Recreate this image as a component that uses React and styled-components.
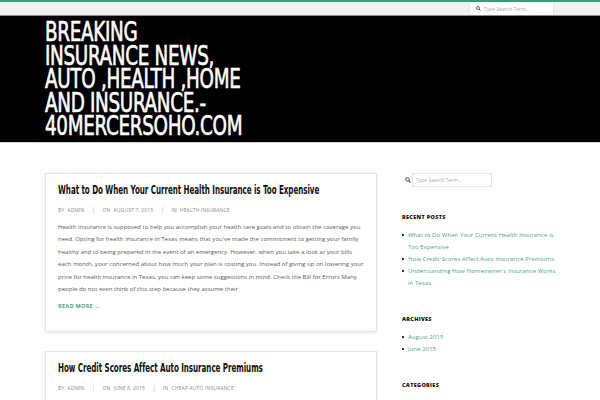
import React from 'react'
import styled, { createGlobalStyle } from 'styled-components'

const colors = {
  green: '#3a9f76',
  link: '#4aa383',
  text: '#5a5a5a',
  meta: '#8a8a8a',
  border: '#e4e4e4',
}

const condensed = '"DejaVu Sans Condensed", "DejaVu Sans", sans-serif'

const GlobalStyle = createGlobalStyle`
  html, body {
    margin: 0;
    padding: 0;
    background: #fff;
    font-family: "Open Sans", "Liberation Sans", sans-serif;
  }
`

const TopBar = styled.div`
  height: 13px;
  border-top: 2px solid ${colors.green};
  border-bottom: 1px solid #8d8d8d;
  background: #f1f1f1;
  display: flex;
  justify-content: flex-end;
  padding-right: 47px;
`
const TopSearch = styled.div`
  width: 83px;
  height: 13px;
  background: #fff;
  box-shadow: 0 0 2px rgba(0, 0, 0, 0.12);
  display: flex;
  align-items: center;
  gap: 3px;
  padding-left: 6px;
  box-sizing: border-box;
`
const Placeholder = styled.span`
  font-size: 5px;
  color: #a9a9a9;
`
const Header = styled.header`
  background: #000;
  height: 127px;
  padding: 5px 45px 0;
  box-sizing: border-box;
  border-bottom: 1px solid #cfcfcf;
`
const SiteTitle = styled.h1`
  margin: 0;
  color: #fff;
  font-family: ${condensed};
  font-weight: 400;
  font-size: 26px;
  line-height: 23.5px;
  letter-spacing: -0.4px;
  text-transform: uppercase;
  white-space: nowrap;
  -webkit-text-stroke: 0.6px #fff;
  transform: scaleX(0.785);
  transform-origin: left top;
`
const Content = styled.div`
  display: flex;
  gap: 23px;
  padding: 30px 42px 0 45px;
`
const Main = styled.main`
  width: 332px;
  flex-shrink: 0;
`
const Card = styled.article`
  border: 1px solid ${colors.border};
  box-shadow: 0 1px 3px rgba(0, 0, 0, 0.08);
  padding: 7px 12px 20px 12px;
  margin-bottom: 19px;
`
const PostTitle = styled.h2`
  margin: 0 0 7px;
  font-family: ${condensed};
  font-weight: 700;
  font-size: 12px;
  line-height: 18px;
  color: #111;
  letter-spacing: -0.1px;
  white-space: nowrap;
  transform: scaleX(0.665);
  transform-origin: left center;
`
const Meta = styled.div`
  display: flex;
  align-items: center;
  font-size: 5px;
  line-height: 8px;
  color: ${colors.meta};
  text-transform: uppercase;
  letter-spacing: 0.15px;
  margin-bottom: 7px;
`
const MetaItem = styled.span`
  & + &::before {
    content: '|';
    margin: 0 7px;
    font-size: 7px;
    color: #bbb;
  }
`
const MetaLabel = styled.span`
  margin-right: 3px;
`
const Body = styled.p`
  margin: 0 0 6px;
  font-size: 6.05px;
  line-height: 12.4px;
  color: ${colors.text};
`
const ReadMore = styled.a`
  display: block;
  font-size: 5.5px;
  line-height: 10px;
  font-weight: 700;
  color: ${colors.link};
  text-transform: uppercase;
  letter-spacing: 0.3px;
  text-decoration: none;
`
const Sidebar = styled.aside`
  width: 156px;
  padding-left: 2px;
`
const SideSearch = styled.div`
  display: flex;
  align-items: center;
  gap: 1px;
  margin: 0 0 24px 3px;
`
const SideInput = styled.div`
  width: 80px;
  height: 14px;
  border: 1px solid #e6e6e6;
  box-sizing: border-box;
  display: flex;
  align-items: center;
  padding-left: 3px;
`
const WidgetTitle = styled.h3`
  margin: 0 0 6px;
  font-size: 5.5px;
  font-weight: 800;
  color: #111;
  text-transform: uppercase;
  letter-spacing: 0.3px;
  line-height: 12px;
`
const List = styled.ul`
  margin: 0 0 ${p => p.gap || 30}px;
  padding: 0;
  list-style: none;
`
const Item = styled.li`
  position: relative;
  padding-left: 6px;
  font-size: 5.95px;
  line-height: 12px;
  letter-spacing: 0.1px;
  color: ${colors.link};
  &::before {
    content: '';
    position: absolute;
    left: 0;
    top: 5px;
    width: 2px;
    height: 2px;
    background: #333;
  }
`

const SearchIcon = ({ size = 5 }) => (
  <svg width={size} height={size} viewBox="0 0 10 10">
    <circle cx="4" cy="4" r="3" fill="none" stroke="#444" strokeWidth="1.6" />
    <line x1="6.2" y1="6.2" x2="9.2" y2="9.2" stroke="#444" strokeWidth="1.8" />
  </svg>
)

const posts = [
  {
    title: 'What to Do When Your Current Health Insurance is Too Expensive',
    date: 'August 7, 2015',
    category: 'Health Insurance',
    body:
      "Health insurance is supposed to help you accomplish your health care goals and to obtain the coverage you need. Opting for health insurance in Texas means that you've made the commitment to getting your family healthy and to being prepared in the event of an emergency. However, when you take a look at your bills each month, your concerned about how much your plan is costing you. Instead of giving up on lowering your price for health insurance in Texas, you can keep some suggestions in mind. Check the Bill for Errors Many people do not even think of this step because they assume their",
  },
  {
    title: 'How Credit Scores Affect Auto Insurance Premiums',
    date: 'June 8, 2015',
    category: 'Cheap Auto Insurance',
    body: '',
  },
]

export default () => {
  return (
    <>
      <GlobalStyle />
      <TopBar>
        <TopSearch>
          <SearchIcon />
          <Placeholder>Type Search Term...</Placeholder>
        </TopSearch>
      </TopBar>
      <Header>
        <SiteTitle>
          Breaking<br />
          Insurance News,<br />
          Auto ,Health ,Home<br />
          and Insurance.-<br />
          40mercersoho.com
        </SiteTitle>
      </Header>
      <Content>
        <Main>
          {posts.map(post => (
            <Card key={post.title}>
              <PostTitle>{post.title}</PostTitle>
              <Meta>
                <MetaItem><MetaLabel>By</MetaLabel>admin</MetaItem>
                <MetaItem><MetaLabel>On</MetaLabel>{post.date}</MetaItem>
                <MetaItem><MetaLabel>In</MetaLabel>{post.category}</MetaItem>
              </Meta>
              {post.body && (
                <>
                  <Body>{post.body}</Body>
                  <ReadMore href="#">Read More →</ReadMore>
                </>
              )}
            </Card>
          ))}
        </Main>
        <Sidebar>
          <SideSearch>
            <SearchIcon size={6} />
            <SideInput>
              <Placeholder>Type Search Term...</Placeholder>
            </SideInput>
          </SideSearch>
          <WidgetTitle>Recent Posts</WidgetTitle>
          <List gap={24}>
            <Item>What to Do When Your Current Health Insurance is Too Expensive</Item>
            <Item>How Credit Scores Affect Auto Insurance Premiums</Item>
            <Item>Understanding How Homeowner's Insurance Works in Texas</Item>
          </List>
          <WidgetTitle>Archives</WidgetTitle>
          <List gap={24}>
            <Item>August 2015</Item>
            <Item>June 2015</Item>
          </List>
          <WidgetTitle>Categories</WidgetTitle>
          <List>
            <Item>Cheap Auto Insurance</Item>
          </List>
        </Sidebar>
      </Content>
    </>
  )
}
